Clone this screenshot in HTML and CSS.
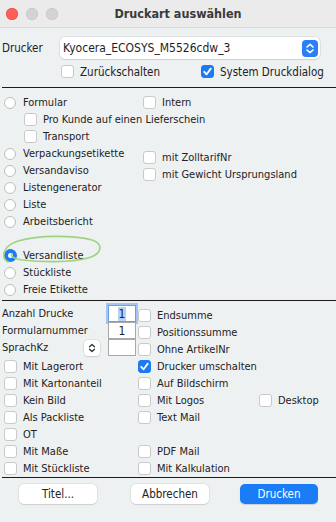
FILE: index.html
```html
<!DOCTYPE html>
<html lang="de">
<head>
    <meta charset="UTF-8">
    <meta name="viewport" content="width=device-width, initial-scale=1.0">
    <title>Druckart auswählen</title>
    <link rel="stylesheet" href="styles.css">
</head>
<body>
<div class="window">
    <div class="titlebar">
        <div class="lights">
            <span class="light red"></span>
            <span class="light"></span>
            <span class="light"></span>
        </div>
        <div class="title">Druckart auswählen</div>
    </div>

    <div class="printer">
        <div class="printer-row">
            <span class="printer-label">Drucker</span>
            <div class="select">
                <span>Kyocera_ECOSYS_M5526cdw_3</span>
                <span class="select-arrows">
                    <svg width="16" height="17" viewBox="0 0 16 17"><path d="M5 7 L8 4.3 L11 7 M5 10 L8 12.7 L11 10" fill="none" stroke="#fff" stroke-width="1.6" stroke-linecap="round" stroke-linejoin="round"/></svg>
                </span>
            </div>
        </div>
        <div class="printer-opts">
            <div class="check opt-first"><span class="box"></span>Zurückschalten</div>
            <div class="check"><span class="box on"><svg width="13" height="13" viewBox="0 0 13 13"><path d="M3.2 6.8 L5.6 9.3 L9.8 3.6" fill="none" stroke="#fff" stroke-width="1.8" stroke-linecap="round" stroke-linejoin="round"/></svg></span>System Druckdialog</div>
        </div>
    </div>

    <div class="rule"></div>

    <div class="kinds">
        <div class="row">
            <div class="left"><span class="radio"></span>Formular</div>
            <div class="check"><span class="box"></span>Intern</div>
        </div>
        <div class="row indent">
            <div class="check"><span class="box"></span>Pro Kunde auf einen Lieferschein</div>
        </div>
        <div class="row indent">
            <div class="check"><span class="box"></span>Transport</div>
        </div>
        <div class="row">
            <div class="left"><span class="radio"></span>Verpackungsetikette</div>
            <div class="check drop"><span class="box"></span>mit ZolltarifNr</div>
        </div>
        <div class="row">
            <div class="left"><span class="radio"></span>Versandaviso</div>
            <div class="check drop"><span class="box"></span>mit Gewicht Ursprungsland</div>
        </div>
        <div class="row"><div class="left"><span class="radio"></span>Listengenerator</div></div>
        <div class="row"><div class="left"><span class="radio"></span>Liste</div></div>
        <div class="row"><div class="left"><span class="radio"></span>Arbeitsbericht</div></div>
        <div class="row"></div>
        <div class="row"><div class="left"><span class="radio on"></span>Versandliste</div></div>
        <div class="row"><div class="left"><span class="radio"></span>Stückliste</div></div>
        <div class="row"><div class="left"><span class="radio"></span>Freie Etikette</div></div>

        <svg class="mark" width="104" height="40" viewBox="0 0 104 40">
            <path d="M8 30 C1 26 2 14 18 9 C38 3 74 3 92 8 C104 12 102 22 88 26 C70 31 40 30 22 28 C14 27 10 24 12 22" fill="none" stroke="#9fd47f" stroke-width="1.6" stroke-linecap="round"/>
        </svg>
    </div>

    <div class="rule"></div>

    <div class="settings">
        <div class="srow">
            <div class="c1 field"><span>Anzahl Drucke</span><span class="num focus"><span class="sel">1</span></span></div>
            <div class="c2 check"><span class="box"></span>Endsumme</div>
        </div>
        <div class="srow">
            <div class="c1 field"><span>Formularnummer</span><span class="num">1</span></div>
            <div class="c2 check"><span class="box"></span>Positionssumme</div>
        </div>
        <div class="srow">
            <div class="c1 field"><span>SprachKz</span>
                <span class="stepper"><svg width="8" height="10" viewBox="0 0 8 10"><path d="M1.5 3.8 L4 1.5 L6.5 3.8 M1.5 6.2 L4 8.5 L6.5 6.2" fill="none" stroke="#333" stroke-width="1.3" stroke-linecap="round" stroke-linejoin="round"/></svg></span>
                <span class="num"></span>
            </div>
            <div class="c2 check"><span class="box"></span>Ohne ArtikelNr</div>
        </div>
        <div class="srow">
            <div class="c1 check"><span class="box"></span>Mit Lagerort</div>
            <div class="c2 check"><span class="box on"><svg width="13" height="13" viewBox="0 0 13 13"><path d="M3.2 6.8 L5.6 9.3 L9.8 3.6" fill="none" stroke="#fff" stroke-width="1.8" stroke-linecap="round" stroke-linejoin="round"/></svg></span>Drucker umschalten</div>
        </div>
        <div class="srow">
            <div class="c1 check"><span class="box"></span>Mit Kartonanteil</div>
            <div class="c2 check"><span class="box"></span>Auf Bildschirm</div>
        </div>
        <div class="srow">
            <div class="c1 check"><span class="box"></span>Kein Bild</div>
            <div class="c2 check"><span class="box"></span>Mit Logos</div>
            <div class="check"><span class="box"></span>Desktop</div>
        </div>
        <div class="srow">
            <div class="c1 check"><span class="box"></span>Als Packliste</div>
            <div class="c2 check"><span class="box"></span>Text Mail</div>
        </div>
        <div class="srow">
            <div class="c1 check"><span class="box"></span>OT</div>
        </div>
        <div class="srow">
            <div class="c1 check"><span class="box"></span>Mit Maße</div>
            <div class="c2 check"><span class="box"></span>PDF Mail</div>
        </div>
        <div class="srow">
            <div class="c1 check"><span class="box"></span>Mit Stückliste</div>
            <div class="c2 check"><span class="box"></span>Mit Kalkulation</div>
        </div>
    </div>

    <div class="rule"></div>

    <div class="buttons">
        <button class="btn">Titel...</button>
        <button class="btn cancel">Abbrechen</button>
        <button class="btn primary">Drucken</button>
    </div>
</div>
</body>
</html>
```

FILE: styles.css
```css
body {
    margin: 0;
    background-color: #eef1f2;
    font-family: "DejaVu Sans Condensed", "Liberation Sans", sans-serif;
    font-size: 11px;
    color: #222;
}
.window {
    width: 336px;
    height: 522px;
    background-color: #eef1f2;
}
.titlebar {
    height: 27px;
    display: flex;
    align-items: center;
    position: relative;
    background-color: #ebebeb;
    border-bottom: 1px solid #dadada;
}
.lights {
    display: flex;
    gap: 8px;
    padding-left: 6px;
}
.light {
    width: 12px;
    height: 12px;
    border-radius: 50%;
    background-color: #d3d3d3;
    box-shadow: inset 0 0 0 0.5px #c2c2c2;
}
.light.red {
    background-color: #fe5f57;
    box-shadow: inset 0 0 0 0.5px #e2463f;
}
.title {
    flex: 1;
    text-align: center;
    font-weight: bold;
    font-size: 12.5px;
    color: #3a3a3a;
    margin-left: -50px;
    padding-left: 12px;
}
.printer {
    padding: 9px 0 9px 2px;
}
.printer-row {
    display: flex;
    align-items: center;
    height: 22px;
}
.printer-label {
    width: 58px;
    font-size: 11.5px;
}
.select {
    width: 260px;
    height: 22px;
    display: flex;
    align-items: center;
    justify-content: space-between;
    background-color: #fff;
    border-radius: 5px;
    box-shadow: 0 0 0 0.5px #d0d0d0, 0 1px 1px rgba(0,0,0,0.12);
    padding-left: 3px;
    padding-right: 2px;
    box-sizing: border-box;
    font-size: 12px;
    color: #1e1e1e;
}
.select-arrows {
    width: 16px;
    height: 17px;
    border-radius: 4px;
    background-color: #2a7ef6;
    display: flex;
}
.printer-opts {
    display: flex;
    margin-top: 6px;
    padding-left: 59px;
    height: 13px;
    align-items: center;
    font-size: 11.5px;
}
.opt-first {
    width: 140px;
}
.rule {
    height: 1px;
    margin-left: 2px;
    background-color: #1c1c1c;
}
.check {
    display: flex;
    align-items: center;
    white-space: nowrap;
}
.box {
    width: 13px;
    height: 13px;
    box-sizing: border-box;
    border: 1px solid #c9c9c9;
    border-radius: 3px;
    background-color: #fff;
    margin-right: 6px;
    flex: none;
    display: flex;
}
.box.on {
    background-color: #1b7bf5;
    border-color: #1b7bf5;
}
.box.on svg {
    margin: -1px;
}
.radio {
    width: 12px;
    height: 12px;
    box-sizing: border-box;
    border: 1px solid #bdbdbd;
    border-radius: 50%;
    background-color: #fff;
    margin-right: 7px;
    flex: none;
}
.radio.on {
    width: 13px;
    height: 13px;
    margin-right: 6px;
    border: 4px solid #1b7bf5;
}
.kinds {
    position: relative;
    padding: 6px 0 2px 4px;
}
.row {
    display: flex;
    align-items: center;
    height: 17px;
}
.row .left {
    width: 139px;
    display: flex;
    align-items: center;
}
.row.indent {
    padding-left: 20px;
}
.drop {
    margin-top: 7px;
}
.mark {
    position: absolute;
    left: 0;
    top: 144px;
}
.settings {
    padding: 6px 0 0 0;
}
.srow {
    display: flex;
    align-items: center;
    height: 17px;
}
.c1 {
    width: 134px;
    padding-left: 2px;
    padding-right: 2px;
}
.c1.check {
    padding-left: 4px;
    width: 132px;
}
.c2 {
    width: 121px;
}
.field {
    display: flex;
    align-items: center;
    margin-bottom: 4px;
}
.num {
    margin-left: auto;
    width: 28px;
    height: 17px;
    box-sizing: border-box;
    border: 1px solid #a9a9a9;
    background-color: #fff;
    display: flex;
    align-items: center;
    justify-content: center;
    font-size: 12px;
}
.num.focus {
    border-color: #6d9ee8;
    box-shadow: 0 0 0 2px #a4c4f4;
}
.sel {
    background-color: #b4d3fb;
    padding: 0 1px;
}
.stepper {
    margin-left: auto;
    margin-right: 8px;
    width: 16px;
    height: 16px;
    border-radius: 4px;
    background-color: #fff;
    box-shadow: 0 0 0 0.5px #cfcfcf, 0 1px 1px rgba(0,0,0,0.15);
    display: flex;
    align-items: center;
    justify-content: center;
}
.stepper + .num {
    margin-left: 0;
}
.buttons {
    display: flex;
    padding: 6px 0 0 19px;
}
.btn {
    width: 78px;
    height: 20px;
    border: none;
    border-radius: 5px;
    background-color: #fff;
    box-shadow: 0 0 0 0.5px #d2d2d2, 0 1px 1px rgba(0,0,0,0.15);
    font-family: "DejaVu Sans Condensed", "Liberation Sans", sans-serif;
    font-size: 11.5px;
    color: #222;
    padding: 0;
}
.btn.cancel {
    margin-left: 34px;
}
.btn.primary {
    margin-left: 31px;
    background-color: #1a7cf7;
    color: #fff;
    box-shadow: 0 1px 1px rgba(0,0,0,0.15);
}
```
